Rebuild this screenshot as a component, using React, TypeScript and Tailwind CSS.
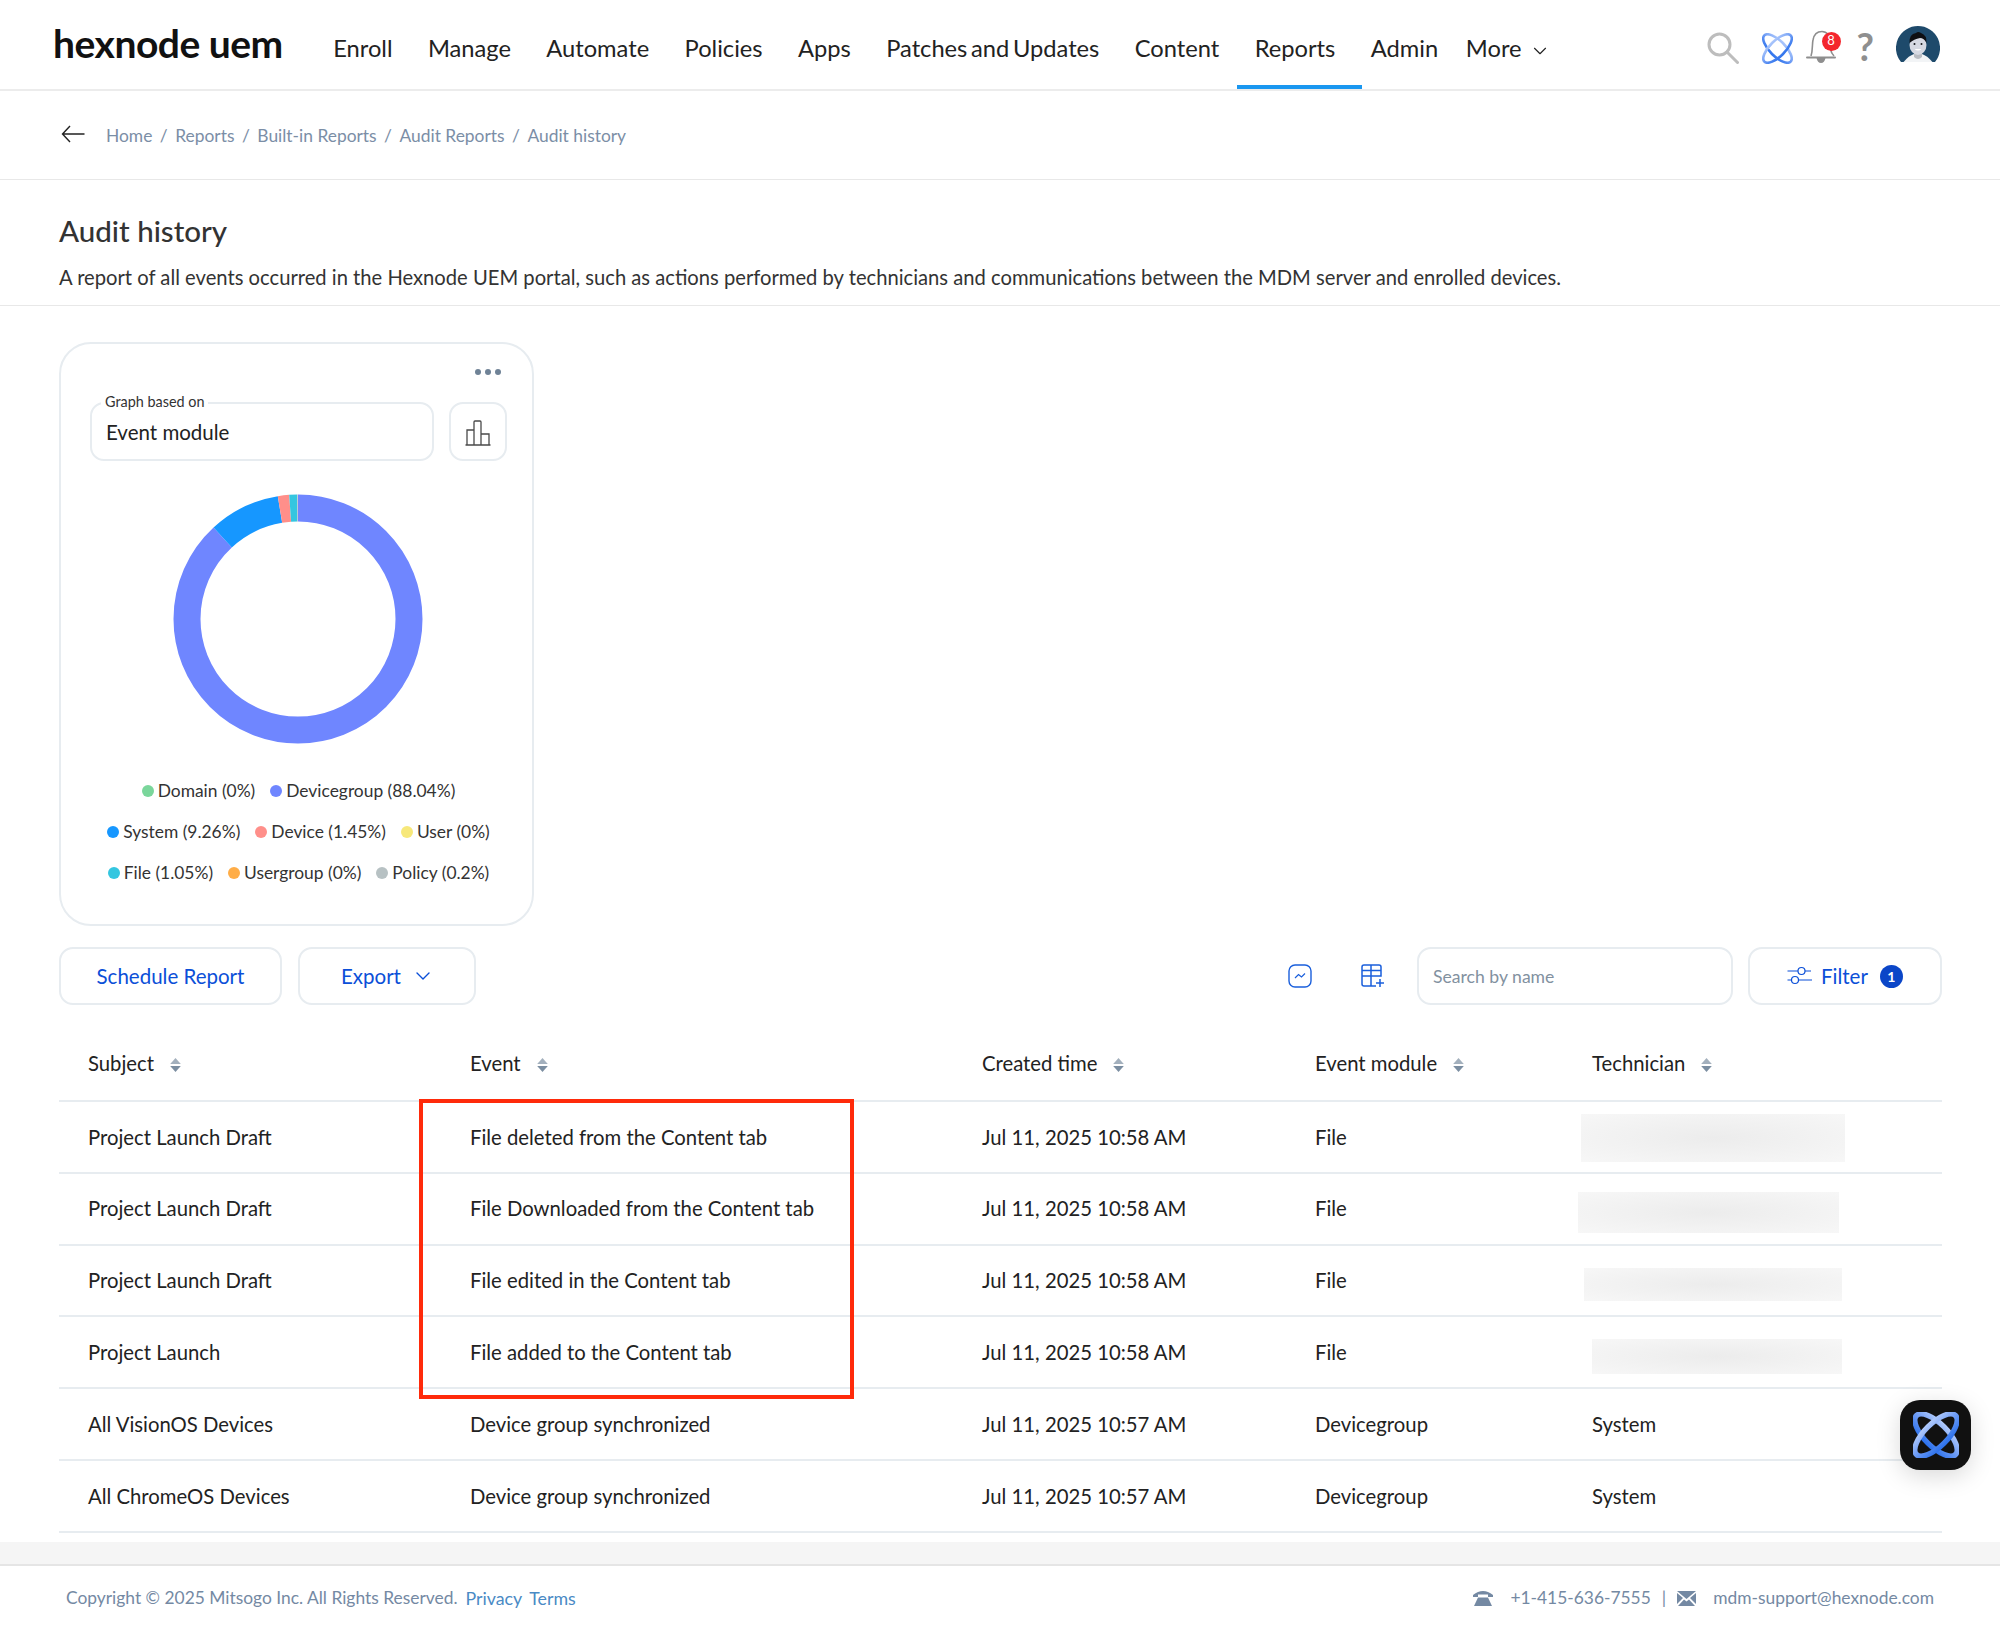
import { ChevronDown } from 'lucide-react'

const navItems = ['Enroll', 'Manage', 'Automate', 'Policies', 'Apps', 'Patches and Updates', 'Content', 'Reports', 'Admin']

const crumbs = ['Home', 'Reports', 'Built-in Reports', 'Audit Reports', 'Audit history']

const legendRows = [
  [
    { label: 'Domain (0%)', dot: 'bg-[#7ad69b]' },
    { label: 'Devicegroup (88.04%)', dot: 'bg-[#6f86ff]' },
  ],
  [
    { label: 'System (9.26%)', dot: 'bg-[#1697ff]' },
    { label: 'Device (1.45%)', dot: 'bg-[#ff8f8a]' },
    { label: 'User (0%)', dot: 'bg-[#f7e87a]' },
  ],
  [
    { label: 'File (1.05%)', dot: 'bg-[#34c6e0]' },
    { label: 'Usergroup (0%)', dot: 'bg-[#ffad47]' },
    { label: 'Policy (0.2%)', dot: 'bg-[#b7c1c3]' },
  ],
]

const slices = [
  { pct: 88.04, color: '#6f86ff' },
  { pct: 9.26, color: '#1697ff' },
  { pct: 1.45, color: '#ff8f8a' },
  { pct: 1.05, color: '#34c6e0' },
  { pct: 0.2, color: '#b7c1c3' },
]

const columns = ['Subject', 'Event', 'Created time', 'Event module', 'Technician']

const rows = [
  { subject: 'Project Launch Draft', event: 'File deleted from the Content tab', time: 'Jul 11, 2025 10:58 AM', module: 'File', blur: 'w-[264px] h-[48px] ml-[-11px] mt-[2px]' },
  { subject: 'Project Launch Draft', event: 'File Downloaded from the Content tab', time: 'Jul 11, 2025 10:58 AM', module: 'File', blur: 'w-[261px] h-[41px] ml-[-14px] mt-[8px]' },
  { subject: 'Project Launch Draft', event: 'File edited in the Content tab', time: 'Jul 11, 2025 10:58 AM', module: 'File', blur: 'w-[258px] h-[33px] ml-[-8px] mt-[9px]' },
  { subject: 'Project Launch', event: 'File added to the Content tab', time: 'Jul 11, 2025 10:58 AM', module: 'File', blur: 'w-[250px] h-[35px] mt-[9px]' },
  { subject: 'All VisionOS Devices', event: 'Device group synchronized', time: 'Jul 11, 2025 10:57 AM', module: 'Devicegroup', tech: 'System' },
  { subject: 'All ChromeOS Devices', event: 'Device group synchronized', time: 'Jul 11, 2025 10:57 AM', module: 'Devicegroup', tech: 'System' },
]

function Donut() {
  const r = 111
  const circ = 2 * Math.PI * r
  let offset = 0
  return (
    <svg width="250" height="250" viewBox="0 0 250 250" className="block">
      <g transform="rotate(-90 125 125)">
        {slices.map((s) => {
          const len = (s.pct / 100) * circ
          const el = (
            <circle
              key={s.color}
              cx="125"
              cy="125"
              r={r}
              fill="none"
              stroke={s.color}
              strokeWidth="27"
              strokeDasharray={`${len} ${circ - len}`}
              strokeDashoffset={-offset}
            />
          )
          offset += len
          return el
        })}
      </g>
    </svg>
  )
}

function Atom({ size, id, width = 5 }: { size: number; id: string; width?: number }) {
  return (
    <svg width={size} height={size} viewBox="0 0 60 60">
      <defs>
        <linearGradient id={id} gradientUnits="userSpaceOnUse" x1="30" y1="4" x2="30" y2="56">
          <stop offset="0" stopColor="#cfdfff" />
          <stop offset="0.5" stopColor="#6c9bf5" />
          <stop offset="1" stopColor="#0f5ee8" />
        </linearGradient>
      </defs>
      <ellipse cx="30" cy="30" rx="36" ry="15" fill="none" stroke={`url(#${id})`} strokeWidth={width} transform="rotate(45 30 30)" />
      <ellipse cx="30" cy="30" rx="36" ry="15" fill="none" stroke={`url(#${id})`} strokeWidth={width} transform="rotate(-45 30 30)" />
    </svg>
  )
}

function SortIcon() {
  return (
    <svg width="11" height="14" viewBox="0 0 11 14" className="shrink-0 mt-[3px]">
      <path d="M5.5 0 L10.8 6 H0.2 Z" fill="#a3b0bd" />
      <path d="M5.5 14 L10.8 8 H0.2 Z" fill="#7b8ea1" />
    </svg>
  )
}

function Avatar() {
  return (
    <svg width="44" height="42" viewBox="0 0 44 42">
      <defs>
        <clipPath id="avatar-clip">
          <path d="M22 0 A22 22 0 0 1 39 36 L5 36 A22 22 0 0 1 22 0 Z" />
        </clipPath>
      </defs>
      <g clipPath="url(#avatar-clip)">
        <rect width="44" height="42" fill="#1e4a6b" />
        <path d="M6 38 Q12 30 18 28 H26 Q32 30 38 38 Z" fill="#f2f4f6" />
        <path d="M18 24 H26 V31 Q22 35 18 31 Z" fill="#b9bcc2" />
        <ellipse cx="22" cy="19" rx="8.5" ry="10" fill="#d6d9e2" />
        <path d="M13.5 17 Q13 8 20 7 Q22 5 25 7 Q31 9 30.5 17 Q28 12 24 12 Q18 13 13.5 17 Z" fill="#0e0f12" />
        <circle cx="18.5" cy="18" r="1" fill="#1b1c20" />
        <circle cx="25.5" cy="18" r="1" fill="#1b1c20" />
        <path d="M18.5 23 Q22 26 25.5 23 Z" fill="#ffffff" />
      </g>
    </svg>
  )
}

export default function App() {
  return (
    <div className="relative w-[2000px] h-[1631px] overflow-hidden bg-white flex flex-col font-[Lato,sans-serif] text-[#222]">
      {/* Top bar */}
      <header className="h-[91px] shrink-0 border-b-2 border-[#ececec] flex items-stretch pl-[53px] pr-[60px]">
        <div className="w-[262.5px] shrink-0 flex items-center">
          <span className="font-bold text-[39px] tracking-[-0.5px] text-[#111] leading-none mt-[-2px]">hexnode uem</span>
        </div>
        <nav className="flex items-stretch text-[23.7px] [word-spacing:-2.4px]">
          {navItems.map((item) => (
            <a key={item} className="relative px-[17.7px] h-[89px] flex items-center text-[#222] pt-[8px]">
              {item}
              {item === 'Reports' && <span className="absolute left-0 right-[-9px] bottom-0 h-[4px] bg-[#1a97f0]" />}
            </a>
          ))}
          <a className="pl-[10px] h-[89px] flex items-center gap-[7px] text-[#222] pt-[8px]">
            More
            <ChevronDown size={22} strokeWidth={1.25} className="mt-[5px]" />
          </a>
        </nav>
        <div className="ml-auto flex items-center relative">
          <svg width="32" height="32" viewBox="0 0 32 32" className="mr-[23px] mt-[6px]">
            <circle cx="12.5" cy="12.5" r="10.5" fill="none" stroke="#bdbdbd" strokeWidth="3" />
            <path d="M20 20 L30.5 30.5" stroke="#bdbdbd" strokeWidth="3" strokeLinecap="round" />
          </svg>
          <div className="mr-[13px] mt-[7px]">
            <Atom size={31} id="atom-top" width={5} />
          </div>
          <div className="relative w-[30px] h-[34px] mr-[21px] mt-[4px]">
            <svg width="30" height="34" viewBox="0 0 30 34">
              <path d="M5 26 C7 20 6 14 7 10 C8 4 12 1.5 16 1.5 C21 1.5 24 6 24 11 C24 17 24 22 28 26" fill="none" stroke="#8e8e8e" strokeWidth="1.6" />
              <path d="M1 27.5 H29" stroke="#8e8e8e" strokeWidth="2" strokeLinecap="round" />
              <path d="M10.5 28 H19.5 Q18.5 33 15 33 Q11.5 33 10.5 28 Z" fill="#8e8e8e" />
            </svg>
            <span className="absolute right-[-5px] top-[2px] w-[19px] h-[19px] rounded-full bg-[#f4262d] text-white text-[13px] flex items-center justify-center">8</span>
          </div>
          <span className="text-[38px] font-bold text-[#8f8f8f] leading-none mr-[22px] mt-[2px]">?</span>
          <div className="mt-[5px]">
            <Avatar />
          </div>
        </div>
      </header>

      {/* Breadcrumb */}
      <div className="h-[89px] shrink-0 border-b border-[#e8e8e8] flex items-center pl-[61px]">
        <svg width="24" height="18" viewBox="0 0 24 18" className="mr-[21px] mt-[-2px]">
          <path d="M9 1 L1.5 9 L9 17 M1.5 9 H23.5" fill="none" stroke="#222" strokeWidth="1.4" />
        </svg>
        <div className="flex items-center text-[17.4px] text-[#7b8ea6] mt-[2px]">
          {crumbs.map((c, i) => (
            <span key={c} className="flex items-center">
              {i > 0 && <span className="mx-[7.5px]">/</span>}
              {c}
            </span>
          ))}
        </div>
      </div>

      {/* Title */}
      <div className="h-[126px] shrink-0 border-b border-[#e8e8e8] px-[59px] pt-[31px]">
        <h1 className="text-[29.5px] leading-[40px] font-medium text-[#333]">Audit history</h1>
        <p className="text-[20.2px] leading-[28px] mt-[12px] text-[#333]">
          A report of all events occurred in the Hexnode UEM portal, such as actions performed by technicians and communications between the MDM server and enrolled devices.
        </p>
      </div>

      {/* Main */}
      <main className="flex-1 px-[58px] pt-[36px]">
        <section className="w-[475px] h-[584px] ml-[1px] border-2 border-[#e7ecf0] rounded-[32px] pl-[29px] pr-[25px] relative">
          <div className="flex justify-end gap-[4px] pt-[25px] pr-[6px] h-[58px]">
            <span className="w-[6px] h-[6px] rounded-full bg-[#6f8296]" />
            <span className="w-[6px] h-[6px] rounded-full bg-[#6f8296]" />
            <span className="w-[6px] h-[6px] rounded-full bg-[#6f8296]" />
          </div>
          <div className="flex gap-[15px]">
            <div className="relative w-[344px] shrink-0 h-[59px] border-2 border-[#e7ecf0] rounded-[14px] flex items-center pl-[14px]">
              <span className="absolute left-[9px] top-[-11px] bg-white px-[4px] text-[14.4px] leading-[18px] text-[#333]">Graph based on</span>
              <span className="text-[20.5px] text-[#222] mt-[1px]">Event module</span>
            </div>
            <div className="w-[58px] shrink-0 h-[59px] border-2 border-[#e7ecf0] rounded-[14px] flex items-center justify-center">
              <svg width="26" height="26" viewBox="0 0 26 26" className="mt-[2px]">
                <path d="M2 25 V10 H9 V25 M9 25 V2 Q9 1 10 1 H15 Q16 1 16 2 V25 M16 14 H24 V25 M0.5 25 H25.5" fill="none" stroke="#4a4a4a" strokeWidth="1.3" />
              </svg>
            </div>
          </div>
          <div className="flex justify-center mt-[33px] pl-[4px] pr-[6px]">
            <Donut />
          </div>
          <div className="mt-[35px] flex flex-col gap-[18px] items-center text-[17.4px] leading-[23px] text-[#333]">
            {legendRows.map((row, i) => (
              <div key={i} className="flex gap-[15px] whitespace-nowrap">
                {row.map((l) => (
                  <span key={l.label} className="flex items-center gap-[4px]">
                    <span className={`w-[12px] h-[12px] rounded-full ${l.dot}`} />
                    {l.label}
                  </span>
                ))}
              </div>
            ))}
          </div>
        </section>

        {/* Toolbar */}
        <div className="mt-[21px] flex items-center w-[1883px] ml-[1px]">
          <button className="w-[223px] h-[58px] border-2 border-[#e7ecf0] rounded-[14px] text-[20.5px] text-[#0b4fd8]">Schedule Report</button>
          <button className="ml-[16px] w-[178px] h-[58px] border-2 border-[#e7ecf0] rounded-[14px] text-[20.5px] text-[#0b4fd8] flex items-center justify-center gap-[10px] pl-[2px]">
            Export
            <ChevronDown size={24} strokeWidth={1.4} />
          </button>
          <svg width="24" height="24" viewBox="0 0 24 24" className="ml-auto mr-[49px]">
            <rect x="1" y="1" width="22" height="22" rx="6" fill="none" stroke="#1a5fdc" strokeWidth="1.4" />
            <path d="M7 14 L10.5 10.5 L13.5 13 L17 9.5" fill="none" stroke="#1a5fdc" strokeWidth="1.2" />
          </svg>
          <svg width="24" height="24" viewBox="0 0 24 24" className="mr-[32px]">
            <path d="M15 22 H3 Q1 22 1 20 V3 Q1 1 3 1 H18 Q20 1 20 3 V12 H1 M1 6.5 H20 M10 1 V22" fill="none" stroke="#1a5fdc" strokeWidth="1.5" />
            <path d="M19 15 V23 M15 19 H23" stroke="#1a5fdc" strokeWidth="1.5" />
          </svg>
          <div className="w-[316px] h-[58px] border-2 border-[#e7ecf0] rounded-[14px] flex items-center pl-[14px] pt-[2px] text-[17.6px] text-[#82919f]">Search by name</div>
          <button className="ml-[15px] w-[194px] h-[58px] border-2 border-[#e7ecf0] rounded-[14px] flex items-center pl-[37px] text-[20.5px] text-[#0b4fd8]">
            <svg width="26" height="20" viewBox="0 0 26 20">
              <path d="M0.5 5 H11 M18 5 H24 M0.5 14 H4 M12 14 H25" stroke="#0b4fd8" strokeWidth="1.2" />
              <circle cx="14.5" cy="5" r="3.5" fill="none" stroke="#0b4fd8" strokeWidth="1.2" />
              <circle cx="8" cy="14" r="3.5" fill="none" stroke="#0b4fd8" strokeWidth="1.2" />
            </svg>
            <span className="ml-[8px]">Filter</span>
            <span className="ml-[12px] w-[23px] h-[23px] rounded-full bg-[#0b46c8] text-white text-[14px] font-bold flex items-center justify-center">1</span>
          </button>
        </div>

        {/* Table */}
        <div className="relative w-[1883px] ml-[1px] text-[20.3px] text-[#222]">
          <div className="h-[97px] border-b-2 border-[#e7ecf0] px-[29px] grid grid-cols-[382px_512px_333px_277px_1fr] items-center pt-[22px]">
            {columns.map((c) => (
              <div key={c} className="flex items-center gap-[16px] mt-[-1px]">
                {c}
                <SortIcon />
              </div>
            ))}
          </div>
          {rows.map((r, i) => (
            <div key={i} className="h-[71.8px] border-b-2 border-[#e7ecf0] px-[29px] grid grid-cols-[382px_512px_333px_277px_1fr] items-center">
              <div>{r.subject}</div>
              <div>{r.event}</div>
              <div>{r.time}</div>
              <div>{r.module}</div>
              {r.tech ? <div>{r.tech}</div> : <div className={`bg-[radial-gradient(ellipse_at_center,#ececec,#f7f7f7)] ${r.blur}`} />}
            </div>
          ))}
          <div className="absolute left-[360px] top-[94px] w-[435px] h-[300px] border-4 border-[#ff2a0a] pointer-events-none" />
        </div>
      </main>

      <div className="h-[22px] shrink-0 bg-[#f5f5f5]" />

      {/* Footer */}
      <footer className="h-[67px] shrink-0 border-t-2 border-[#e5e5e5] flex items-center pl-[66px] pr-[66px] text-[17.4px] text-[#7489a3]">
        <span>Copyright © 2025 Mitsogo Inc. All Rights Reserved.</span>
        <a className="ml-[8px] text-[#4a8ac5] text-[17.8px]">Privacy</a>
        <a className="ml-[7px] text-[#4a8ac5] text-[17.8px]">Terms</a>
        <div className="ml-auto flex items-center">
          <svg width="20" height="16" viewBox="0 0 20 16" className="mr-[17px]">
            <path d="M0 5 Q10 -3 20 5 V7 L15 7 V4.5 H5 V7 L0 7 Z" fill="#7489a3" />
            <path d="M5 7.5 H15 L19 16 H1 Z" fill="#7489a3" />
          </svg>
          <span>+1-415-636-7555</span>
          <span className="mx-[11px]">|</span>
          <svg width="19" height="15" viewBox="0 0 19 15" className="mr-[17px]">
            <path d="M0 0 H19 L9.5 8 Z M0 2 L6 7 L0 13 Z M19 2 L13 7 L19 13 Z M1 15 L7 8.5 L9.5 10.5 L12 8.5 L18 15 Z" fill="#7489a3" />
          </svg>
          <span>mdm-support@hexnode.com</span>
        </div>
      </footer>

      {/* Floating assistant */}
      <div className="absolute left-[1900px] top-[1400px] w-[71px] h-[70px] rounded-[20px] bg-[#111] shadow-[0_6px_24px_rgba(0,0,0,0.15)] flex items-center justify-center">
        <Atom size={46} id="atom-float" width={7} />
      </div>
    </div>
  )
}
